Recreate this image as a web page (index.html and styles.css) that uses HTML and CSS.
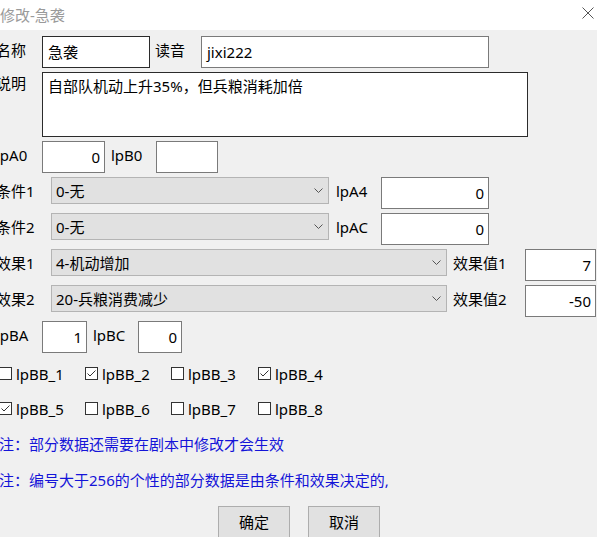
FILE: index.html
```html
<!DOCTYPE html>
<html lang="zh-CN">
<head>
<meta charset="utf-8">
<title>修改-急袭</title>
<link rel="stylesheet" href="styles.css">
</head>
<body>
<div class="window">
  <div class="titlebar">
    <span class="title">修改-急袭</span>
    <span class="close"><svg width="12" height="12" viewBox="0 0 12 12"><path d="M0.5 0.5 L11.5 11.5 M11.5 0.5 L0.5 11.5" stroke="#555" stroke-width="1" fill="none"/></svg></span>
  </div>
  <div class="client">
    <div class="form">
      <div class="row">
        <span class="lbl w46">名称</span>
        <div class="edit dark w108">急袭</div>
        <span class="lbl2 w51">读音</span>
        <div class="edit w288">jixi222</div>
      </div>
      <div class="row tall">
        <span class="lbl w46">说明</span>
        <div class="memo">自部队机动上升35%，但兵粮消耗加倍</div>
      </div>
      <div class="row">
        <span class="lbl w46">lpA0</span>
        <div class="edit num w63">0</div>
        <span class="lbl2 w51 p6">lpB0</span>
        <div class="edit w62"></div>
      </div>
      <div class="row">
        <span class="lbl w55">条件1</span>
        <div class="combo w278"><span>0-无</span><svg class="chev" width="9" height="5" viewBox="0 0 9 5"><path d="M0.5 0.5 L4.5 4.5 L8.5 0.5" stroke="#555" stroke-width="1" fill="none"/></svg></div>
        <span class="lbl2 w52 p7">lpA4</span>
        <div class="edit num w108">0</div>
      </div>
      <div class="row">
        <span class="lbl w55">条件2</span>
        <div class="combo w278"><span>0-无</span><svg class="chev" width="9" height="5" viewBox="0 0 9 5"><path d="M0.5 0.5 L4.5 4.5 L8.5 0.5" stroke="#555" stroke-width="1" fill="none"/></svg></div>
        <span class="lbl2 w52 p7">lpAC</span>
        <div class="edit num w108">0</div>
      </div>
      <div class="row">
        <span class="lbl w55">效果1</span>
        <div class="combo w396"><span>4-机动增加</span><svg class="chev" width="9" height="5" viewBox="0 0 9 5"><path d="M0.5 0.5 L4.5 4.5 L8.5 0.5" stroke="#555" stroke-width="1" fill="none"/></svg></div>
        <span class="lbl2 w78 p6">效果值1</span>
        <div class="edit num w71">7</div>
      </div>
      <div class="row">
        <span class="lbl w55">效果2</span>
        <div class="combo w396"><span>20-兵粮消费减少</span><svg class="chev" width="9" height="5" viewBox="0 0 9 5"><path d="M0.5 0.5 L4.5 4.5 L8.5 0.5" stroke="#555" stroke-width="1" fill="none"/></svg></div>
        <span class="lbl2 w78 p6">效果值2</span>
        <div class="edit num w71">-50</div>
      </div>
      <div class="row">
        <span class="lbl w46">lpBA</span>
        <div class="edit num w45">1</div>
        <span class="lbl2 w51 p6">lpBC</span>
        <div class="edit num w44">0</div>
      </div>
    </div>

    <div class="checks">
      <label class="chk"><span class="box"></span>lpBB_1</label>
      <label class="chk"><span class="box"><svg width="11" height="11" viewBox="0 0 11 11"><path d="M1.5 5.5 L4 8 L9.5 2.5" stroke="#333" stroke-width="1" fill="none"/></svg></span>lpBB_2</label>
      <label class="chk"><span class="box"></span>lpBB_3</label>
      <label class="chk"><span class="box"><svg width="11" height="11" viewBox="0 0 11 11"><path d="M1.5 5.5 L4 8 L9.5 2.5" stroke="#333" stroke-width="1" fill="none"/></svg></span>lpBB_4</label>
      <label class="chk"><span class="box"><svg width="11" height="11" viewBox="0 0 11 11"><path d="M1.5 5.5 L4 8 L9.5 2.5" stroke="#333" stroke-width="1" fill="none"/></svg></span>lpBB_5</label>
      <label class="chk"><span class="box"></span>lpBB_6</label>
      <label class="chk"><span class="box"></span>lpBB_7</label>
      <label class="chk"><span class="box"></span>lpBB_8</label>
    </div>

    <div class="note">注：部分数据还需要在剧本中修改才会生效</div>
    <div class="note">注：编号大于256的个性的部分数据是由条件和效果决定的,</div>

    <div class="buttons">
      <div class="btn">确定</div>
      <div class="btn">取消</div>
    </div>
  </div>
</div>
</body>
</html>
```

FILE: styles.css
```css
html, body {
  margin: 0;
  padding: 0;
  width: 597px;
  height: 537px;
  overflow: hidden;
}
body {
  font-family: "Noto Sans", "Noto Sans CJK SC", sans-serif;
  font-size: 15px;
  color: #000;
  background: #f0f0f0;
}
.window {
  width: 597px;
  height: 537px;
  overflow: hidden;
}
.titlebar {
  height: 30px;
  background: #fff;
  display: flex;
  align-items: center;
  justify-content: space-between;
}
.title {
  color: #9a9a9a;
  font-size: 15px;
  padding-left: 0;
  line-height: 30px;
}
.close {
  display: flex;
  margin-right: 3px;
  margin-top: -4px;
}
.client {
  background: #f0f0f0;
  padding-top: 6px;
}
.form {
  display: flex;
  flex-direction: column;
  gap: 4px;
  margin-left: -4px;
}
.row {
  display: flex;
  align-items: flex-start;
  height: 32px;
}
.row.tall {
  height: 65px;
}
.lbl, .lbl2 {
  box-sizing: border-box;
  height: 28px;
  line-height: 28px;
  white-space: nowrap;
  flex: none;
}
.lbl2 { padding-left: 5px; }
.p6 { padding-left: 6px; }
.p7 { padding-left: 7px; }
.w44 { width: 44px; }
.w45 { width: 45px; }
.w46 { width: 46px; }
.w51 { width: 51px; }
.w52 { width: 52px; }
.w55 { width: 55px; }
.w62 { width: 62px; }
.w63 { width: 63px; }
.w71 { width: 71px; }
.w78 { width: 78px; }
.w108 { width: 108px; }
.w278 { width: 278px; }
.w288 { width: 288px; }
.w396 { width: 396px; }
.edit {
  box-sizing: border-box;
  height: 32px;
  line-height: 30px;
  background: #fff;
  border: 1px solid #7a7a7a;
  padding: 0 5px;
  flex: none;
  white-space: nowrap;
}
.edit.dark {
  border-color: #2b2b2b;
}
.edit.num {
  text-align: right;
  padding-right: 4px;
}
.memo {
  box-sizing: border-box;
  width: 486px;
  height: 65px;
  background: #fff;
  border: 1px solid #2b2b2b;
  padding: 3px 5px;
  line-height: 20px;
}
.row.tall .lbl {
  height: 22px;
  line-height: 22px;
}
.combo {
  box-sizing: border-box;
  height: 27px;
  background: #e1e1e1;
  border: 1px solid #b4b4b4;
  display: flex;
  align-items: center;
  justify-content: space-between;
  padding: 0 5px 0 4px;
  flex: none;
}
.chev { display: block; }
.checks {
  margin-top: 3px;
  margin-left: -1px;
  display: grid;
  grid-template-columns: 86px 86px 87px 87px;
  grid-auto-rows: 35px;
}
.chk {
  display: flex;
  align-items: center;
  white-space: nowrap;
}
.box {
  box-sizing: border-box;
  width: 13px;
  height: 13px;
  border: 1px solid #333;
  background: #fff;
  margin-right: 4px;
  display: flex;
  align-items: center;
  justify-content: center;
  flex: none;
}
.box svg { display: block; }
.note {
  height: 36px;
  line-height: 36px;
  color: #1414d8;
  white-space: nowrap;
  margin-left: -1px;
}
.buttons {
  margin-top: 8px;
  display: flex;
  gap: 18px;
  padding-left: 218px;
}
.btn {
  box-sizing: border-box;
  width: 72px;
  height: 32px;
  line-height: 30px;
  text-align: center;
  background: #e1e1e1;
  border: 1px solid #adadad;
}
```
